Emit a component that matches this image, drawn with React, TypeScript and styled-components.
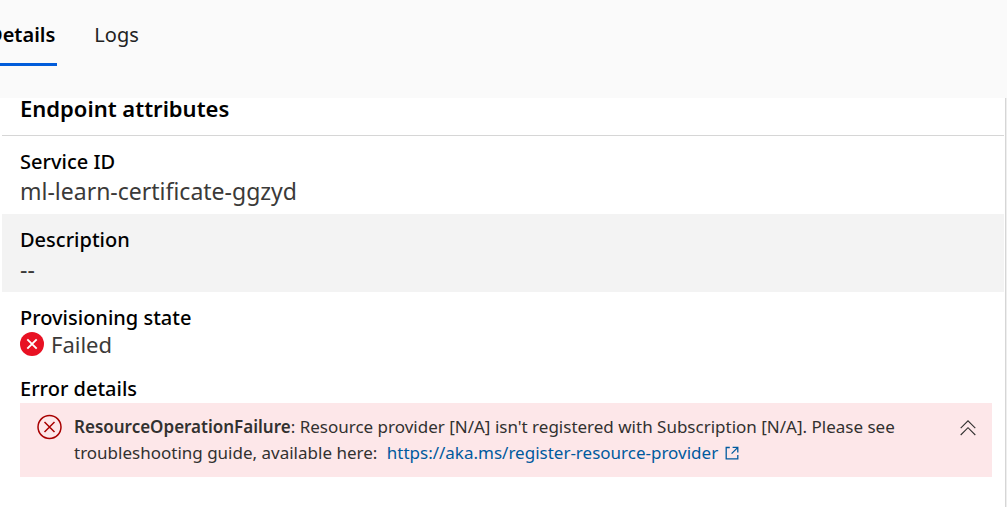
import React from "react";
import styled, { createGlobalStyle } from "styled-components";

const GlobalStyle = createGlobalStyle`
  * { box-sizing: border-box; }
  body {
    margin: 0;
    background: #ffffff;
    color: #000000;
    font-family: "Segoe UI", "Noto Sans", "Open Sans", sans-serif;
    overflow-x: hidden;
  }
  h2, dl, dt, dd, p { margin: 0; }
`;

const Page = styled.div`
  display: flex;
  flex-direction: column;
  min-height: 100vh;
`;

const TabBar = styled.header`
  background: #fafafa;
  padding-bottom: 32px;
  overflow: hidden;
`;

const TabList = styled.nav`
  display: flex;
  gap: 35px;
  margin-left: -14px;
`;

const Tab = styled.button<{ $active?: boolean }>`
  height: 66px;
  padding: 6px 2px 0;
  border: 0;
  border-bottom: 3px solid ${(p) => (p.$active ? "#015cda" : "transparent")};
  background: transparent;
  color: ${(p) => (p.$active ? "#000000" : "#222222")};
  font-family: inherit;
  font-size: 20px;
  line-height: 28px;
  font-weight: ${(p) => (p.$active ? 600 : 400)};
`;

const Panel = styled.main`
  flex: 1;
  margin-right: 1px;
  padding: 0 1px 24px 2px;
  border-right: 1px solid #d6d6d6;
  box-shadow: 1px 0 0 #eeeeee;
`;

const PanelTitle = styled.h2`
  margin-top: -3px;
  padding: 0 18px 13px;
  border-bottom: 1px solid #d6d6d6;
  font-size: 22px;
  line-height: 27px;
  font-weight: 600;
`;

const Row = styled.div<{ $shaded?: boolean }>`
  padding: 12px 18px 8px;
  background: ${(p) => (p.$shaded ? "#f3f3f3" : "transparent")};
`;

const ErrorRow = styled.div`
  padding: 11px 12px 0 18px;
`;

const Label = styled.dt`
  font-size: 20px;
  line-height: 28px;
  font-weight: 500;
`;

const Value = styled.dd`
  font-size: 23px;
  line-height: 30px;
  color: #3b3a39;
`;

const Status = styled.dd`
  display: flex;
  align-items: center;
  gap: 7px;
  font-size: 22px;
  line-height: 24px;
  color: #3b3a39;
`;

const Alert = styled.dd`
  display: flex;
  align-items: flex-start;
  padding: 11px 16px 11px 17px;
  background: #fde7e9;
  color: #323130;
`;

const Message = styled.p`
  flex: 1;
  margin: 0 32px 0 12px;
  font-size: 17px;
  line-height: 26px;

  strong { font-weight: 600; }
`;

const Link = styled.a`
  margin-left: 5px;
  color: #005a9e;
  text-decoration: none;
  white-space: nowrap;

  svg {
    margin-left: 7px;
    vertical-align: -1px;
  }
`;

const Collapse = styled.button`
  display: flex;
  padding: 6px 0 0;
  border: 0;
  background: transparent;
`;

const FailedIcon = () => (
  <svg width="24" height="24" viewBox="0 0 24 24" aria-hidden="true">
    <circle cx="12" cy="12" r="12" fill="#e81123" />
    <path d="M7.3 7.3l9.4 9.4M16.7 7.3l-9.4 9.4" stroke="#fff" strokeWidth="1.9" />
  </svg>
);

const ErrorIcon = () => (
  <svg width="25" height="26" viewBox="0 0 25 26" fill="none" stroke="#a80000" strokeWidth="1.5" aria-hidden="true">
    <circle cx="12.5" cy="13" r="11.5" />
    <path d="M7.5 8l10 10M17.5 8l-10 10" />
  </svg>
);

const ExternalIcon = () => (
  <svg width="14" height="14" viewBox="0 0 14 14" fill="none" stroke="#005a9e" strokeWidth="1.3" aria-hidden="true">
    <path d="M4.8 1.5H1.2v11.3h11.6V9M7.6 1.4h5.2v5.2M12.6 1.6L6.6 7.6" />
  </svg>
);

const ChevronsIcon = () => (
  <svg width="16" height="16" viewBox="0 0 16 16" fill="none" stroke="#323130" strokeWidth="1.1" aria-hidden="true">
    <path d="M.7 8.2L8 .9l7.3 7.3M.7 15L8 7.7l7.3 7.3" />
  </svg>
);

export default function App() {
  return (
    <>
      <GlobalStyle />
      <Page>
        <TabBar>
          <TabList>
            <Tab $active>Details</Tab>
            <Tab>Logs</Tab>
          </TabList>
        </TabBar>
        <Panel>
          <PanelTitle>Endpoint attributes</PanelTitle>
          <dl>
            <Row>
              <Label>Service ID</Label>
              <Value>ml-learn-certificate-ggzyd</Value>
            </Row>
            <Row $shaded>
              <Label>Description</Label>
              <Value>--</Value>
            </Row>
            <Row>
              <Label>Provisioning state</Label>
              <Status>
                <FailedIcon />
                Failed
              </Status>
            </Row>
            <ErrorRow>
              <Label>Error details</Label>
              <Alert role="alert">
                <ErrorIcon />
                <Message>
                  <strong>ResourceOperationFailure</strong>: Resource provider [N/A] isn't registered with
                  Subscription [N/A]. Please see troubleshooting guide, available here:{" "}
                  <Link href="https://aka.ms/register-resource-provider">
                    https://aka.ms/register-resource-provider
                    <ExternalIcon />
                  </Link>
                </Message>
                <Collapse aria-label="Collapse error details">
                  <ChevronsIcon />
                </Collapse>
              </Alert>
            </ErrorRow>
          </dl>
        </Panel>
      </Page>
    </>
  );
}
